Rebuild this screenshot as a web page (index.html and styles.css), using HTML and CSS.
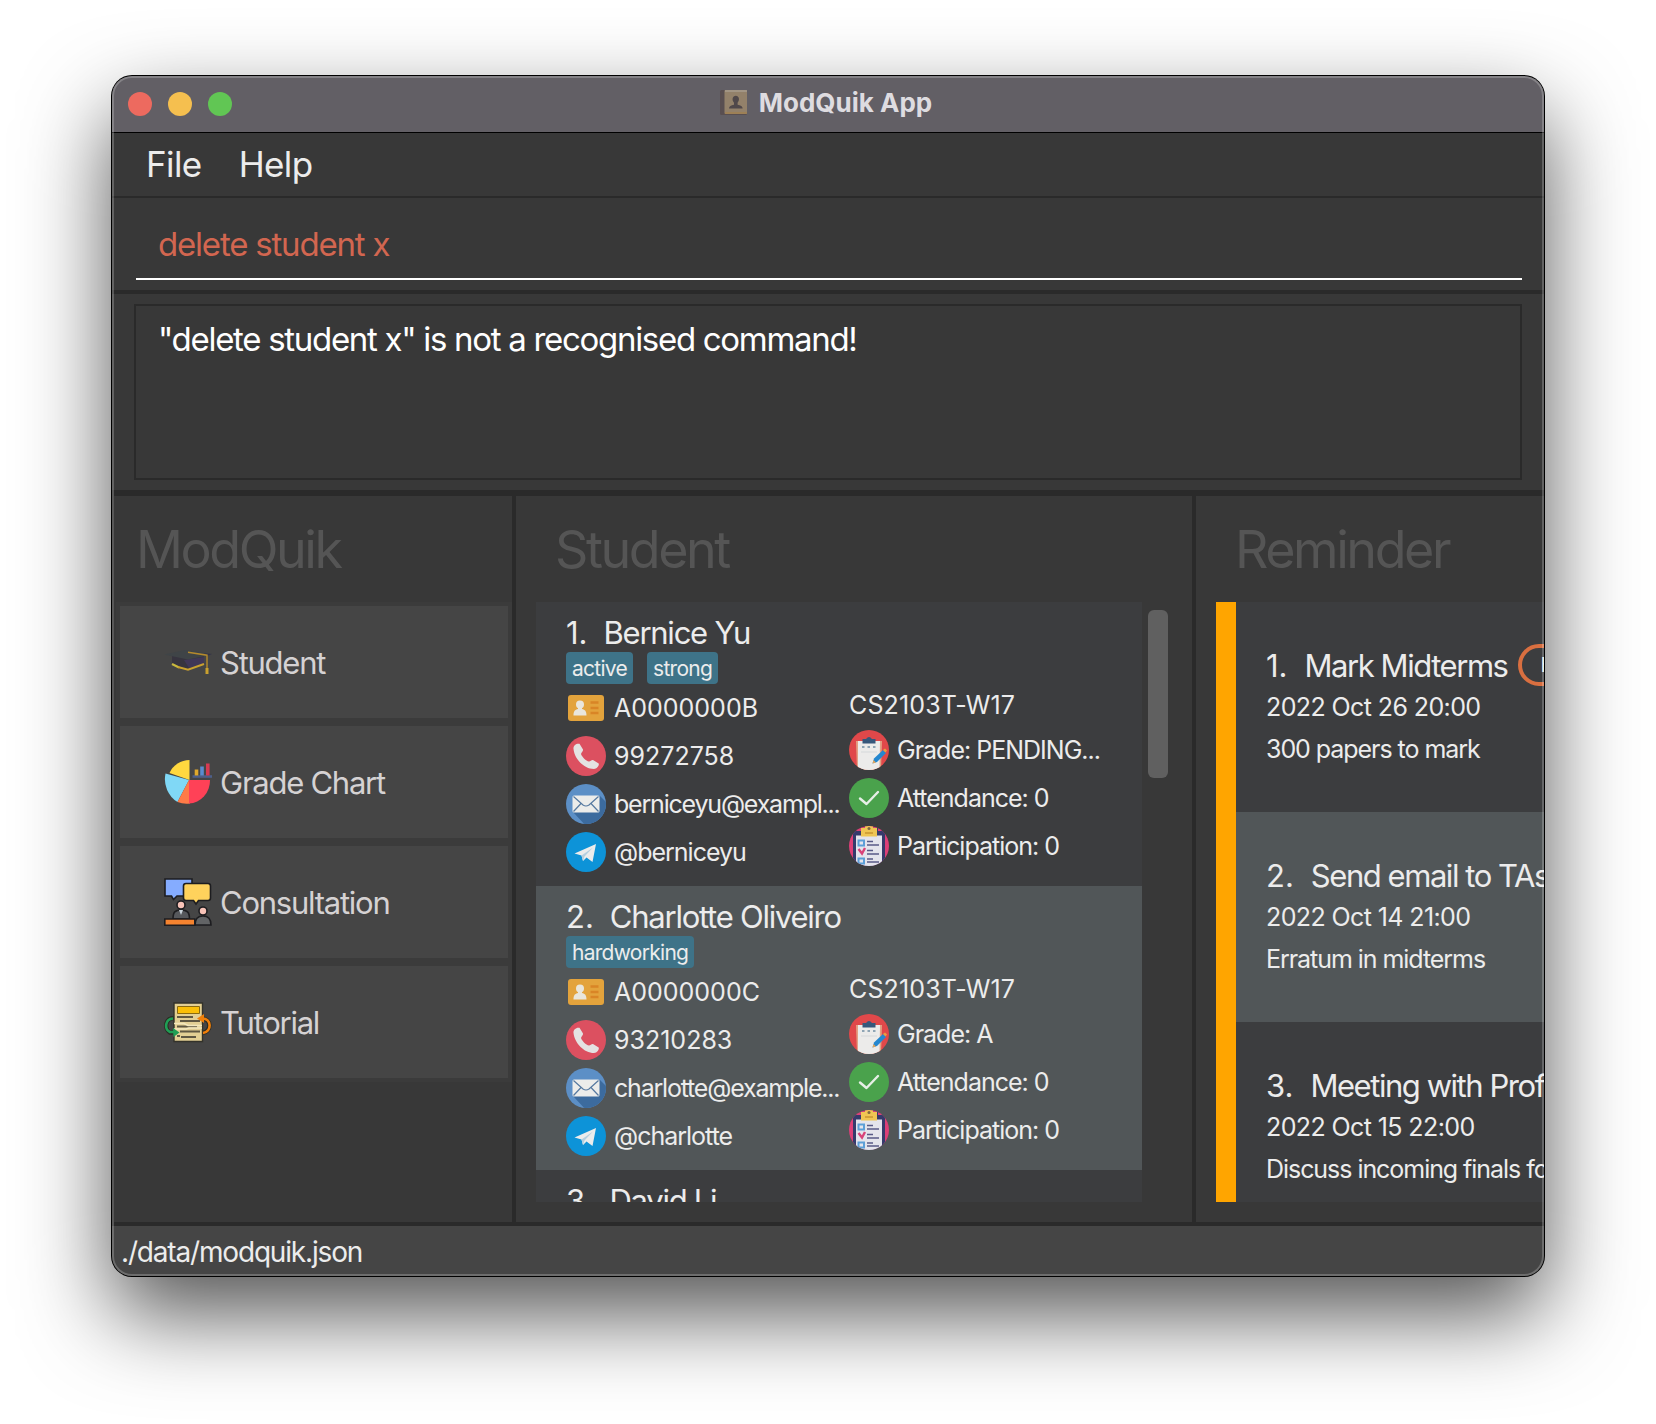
FILE: index.html
```html
<!DOCTYPE html>
<html lang="en">
<head>
<meta charset="utf-8">
<title>ModQuik App</title>
<link rel="stylesheet" href="styles.css">
</head>
<body>
<svg class="sprite" aria-hidden="true">
  <defs>
    <clipPath id="disc"><circle cx="20" cy="20" r="20"/></clipPath>
    <symbol id="i-id" viewBox="0 0 40 40">
      <rect x="2" y="7" width="36" height="26" rx="3" fill="#e3a33c"/>
      <circle cx="14" cy="16.5" r="4" fill="#e9e6dc"/>
      <path d="M12 18h4v3c3 .8 4.500 2 4.500 6.500h-13c0-4.500 1.500-5.700 4.500-6.500z" fill="#e9e6dc"/>
      <path d="M24.500 14.500h8M24.500 20h8M24.500 25h8" stroke="#d98526" stroke-width="2.600"/>
    </symbol>
    <symbol id="i-phone" viewBox="0 0 40 40">
      <circle cx="20" cy="20" r="20" fill="#dc5060"/>
      <path d="M7.500 13C7 9.500 10.500 7 13.500 7.800L17 13.500c.4 1.800-1.800 3-2 4.500 1 3 5 7 8 7.500 1.500-.2 2.500-1.800 4-1.500l5.700 3.500C33.500 29.500 31 33 28 33 18 33 8.500 23 7.500 13z" fill="#e4e2e2"/>
    </symbol>
    <symbol id="i-mail" viewBox="0 0 40 40">
      <circle cx="20" cy="20" r="20" fill="#5c8fc6"/>
      <path d="M34 12l8 8v22H20L7 28z" fill="#3c6b9e" clip-path="url(#disc)"/>
      <rect x="6.500" y="11.500" width="27" height="17" rx="1.500" fill="#ececea"/>
      <path d="M7.500 12.500l9.500 8.500q3 2 6 0l9.500-8.500M7.500 27.500l7.500-8M32.500 27.500l-7.500-8" fill="none" stroke="#5679a0" stroke-width="1.200"/>
    </symbol>
    <symbol id="i-send" viewBox="0 0 40 40">
      <circle cx="20" cy="20" r="20" fill="#0d93d8"/>
      <path d="M8.500 21.500L30 12l-3.500 18-6-4.500-3.500 3.500-1.500-5.500z" fill="#ececec"/>
      <path d="M15.500 23.500L27 15.500 18.500 24.500 17 29z" fill="#b5cfdf"/>
    </symbol>
    <symbol id="i-grade" viewBox="0 0 40 40">
      <g clip-path="url(#disc)">
        <rect width="40" height="40" fill="#e0484a"/>
        <path d="M7 11h26l-1 29H8z" fill="#e2a184"/>
        <path d="M9 11h22l-.5 29H9z" fill="#ecebea"/>
        <path d="M13.500 13.500V9h3.500q3-4 6 0h3.500v4.500z" fill="#36577b"/>
        <path d="M13 17h2.500M18.500 17H21M24 17h2.500" stroke="#8fa5b5" stroke-width="2.200"/>
        <path d="M12 22h16" stroke="#d5d8da" stroke-width="1"/>
      </g>
      <path d="M23.500 33.500l1.500-5 9-8.500 3 3-9 9z" fill="#2587cf"/>
      <path d="M23.500 33.500l1-3.500 2.500 2.500z" fill="#e2a55c"/>
      <path d="M34 20l2-1.500 2 2-1.500 2z" fill="#e8a040"/>
    </symbol>
    <symbol id="i-check" viewBox="0 0 40 40">
      <circle cx="20" cy="20" r="20" fill="#4aa24c"/>
      <path d="M11 20.500l6.500 5.500L29 14" fill="none" stroke="#e6efe6" stroke-width="2.400" stroke-linecap="round" stroke-linejoin="round"/>
    </symbol>
    <symbol id="i-part" viewBox="0 0 40 40">
      <g clip-path="url(#disc)">
        <rect width="40" height="40" fill="#dc3f78"/>
        <path d="M4 5h8V2h17v3h7v35H4z" fill="#363a6b"/>
        <rect x="7" y="9.500" width="26" height="31" fill="#e4e4ec"/>
        <path d="M12 2h4V0h8v2h4v8.500H12z" fill="#efc553"/>
        <circle cx="20" cy="2.500" r="1.500" fill="#7f683f"/>
        <path d="M16 7h8" stroke="#c99530" stroke-width="1.300"/>
        <path d="M9.500 14.500h5.500v5H9.500zM9.500 32.500h5.500v5H9.500z" fill="none" stroke="#5c9fd8" stroke-width="2"/>
        <path d="M9.500 23l3.500 4.500 3-5.500" fill="none" stroke="#d8437a" stroke-width="2.400"/>
        <path d="M18 15.500h6M18 19h12M18 24.500h6M18 28h12M18 33h6M18 36h12" stroke="#585a86" stroke-width="1.700"/>
      </g>
    </symbol>
    <symbol id="i-cap" viewBox="0 0 48 48">
      <path d="M8 18v9l15 4 17-4v-9z" fill="#37343f"/>
      <path d="M20 22l20-3v7l-15 4z" fill="#403757"/>
      <path d="M0 16.500L21 12l27 4-4 1.500L24 21.500z" fill="#3f4447"/>
      <path d="M40 15.500l8 .5-4 1.500z" fill="#33304a"/>
      <path d="M8 26l7 3.500" stroke="#c8b83e" stroke-width="2.200"/>
      <path d="M14 29l10 2.600L40 26" fill="none" stroke="#c9a02f" stroke-width="2"/>
      <path d="M24 14.200l19 3V32" fill="none" stroke="#b58a2c" stroke-width="1.400"/>
      <path d="M43 30v6" stroke="#c9a02f" stroke-width="3"/>
    </symbol>
    <symbol id="i-pie" viewBox="0 0 48 48">
      <path d="M25.500 22V2A22 22 0 0 0 5.500 15z" fill="#ffd83f"/>
      <path d="M25 22L1.500 15.500A27 27 0 0 0 13.500 44z" fill="#80d8f6"/>
      <path d="M25 22L13.500 44A24 24 0 0 0 26 45.500z" fill="#ff7a47"/>
      <path d="M25 22h21A22 23 0 0 1 25 45.500z" fill="#ff4157"/>
      <path d="M28.500 18.500H48" stroke="#4d5f8a" stroke-width="2.600"/>
      <path d="M32.500 11.500v6" stroke="#e0a92c" stroke-width="3.600"/>
      <path d="M38 8.500v9" stroke="#5b8cd0" stroke-width="3.600"/>
      <path d="M43.800 5.500v12" stroke="#d63a52" stroke-width="3.600"/>
    </symbol>
    <symbol id="i-consult" viewBox="0 0 48 48">
      <g stroke="#1d1d20" stroke-width="1.600">
        <path d="M1 1h27v17H13l-3.500 3.500L7.500 18H1z" fill="#85acff"/>
        <path d="M22 5.500h22q2.500 0 2.500 2.500v12q0 2.500-2.500 2.500H34.500L32 26l-2.500-3.500H22q-2.500 0-2.500-2.500V8q0-2.500 2.500-2.500z" fill="#ffd25c"/>
        <path d="M9 41c0-7 2-9 8-9s8.500 2 8.500 9z" fill="#56585c"/>
        <path d="M31 47c0-6 2-9 8-9s8 3 8 9z" fill="#626466"/>
        <circle cx="17" cy="27" r="4" fill="#f8c3b8"/>
        <circle cx="39" cy="33" r="4" fill="#f8c3b8"/>
        <path d="M.8 41h30v6.200H.8z" fill="#f5832f"/>
      </g>
      <path d="M15 32l2 5 2-5z" fill="#c9d3da"/>
    </symbol>
    <symbol id="i-tutorial" viewBox="0 0 48 48">
      <path d="M11 20C1 19 0 31 6 34.500h6" fill="none" stroke="#2c2c24" stroke-width="4.500"/>
      <path d="M37 20.500C48 20 48 34 38 35" fill="none" stroke="#2c2c24" stroke-width="4.500"/>
      <path d="M10 5h28.500v38.500H10z" fill="#e3cf94" stroke="#33322a" stroke-width="1.400"/>
      <path d="M13.500 8.500h22v7h-22z" fill="#fbbf08" stroke="#8a6a10" stroke-width="1"/>
      <path d="M13 19h16M16 23h20M13 28.500h20M16 33.500h20M13 38h3M17 39h15" stroke="#5f5742" stroke-width="1.900"/>
      <path d="M10 25.500h10l4 2h14M10 31h12l3-1h13" fill="none" stroke="#f3e7bd" stroke-width="1.500"/>
      <path d="M9 20.500C1 21 0 31 6 34h4" fill="none" stroke="#1f9d55" stroke-width="2.600"/>
      <path d="M9 30l6.500 4.500L9.500 39z" fill="#1f9d55"/>
      <path d="M38 20.500C48 20 48 34 39 35" fill="none" stroke="#ef7f0a" stroke-width="2.600"/>
      <path d="M40 16l-7 4.500 7 4.500z" fill="#ef7f0a"/>
    </symbol>
  </defs>
</svg>

<div class="window">
  <header class="titlebar">
    <div class="lights"><i class="light red"></i><i class="light amber"></i><i class="light green"></i></div>
    <div class="caption">
      <svg class="book" viewBox="0 0 28 28">
        <rect x="0" y="1" width="27" height="25" rx="1.500" fill="#594f51"/>
        <rect x="4.500" y="1" width="22.500" height="24" rx="1" fill="#93816a"/>
        <path d="M5 2h22" stroke="#a79c8e" stroke-width="1.500"/>
        <path d="M5 24h22" stroke="#a08051" stroke-width="1.500"/>
        <path d="M9 19.500c0-2.500 2-3 5-3.700v-2c-2.500-3-1.500-7 1.800-7s4.300 4 1.800 7v2c3 .7 5 1.200 5 3.700z" fill="#50484a"/>
      </svg>
      <span class="app-name">ModQuik App</span>
    </div>
  </header>
  <nav class="menubar"><span>File</span><span>Help</span></nav>
  <section class="command"><div class="command-field">delete student x</div></section>
  <section class="result"><div class="result-box">"delete student x" is not a recognised command!</div></section>
  <main class="panels">
    <section class="panel side">
      <h2>ModQuik</h2>
      <div class="tabs">
        <div class="tab"><svg><use href="#i-cap"/></svg><span>Student</span></div>
        <div class="tab"><svg><use href="#i-pie"/></svg><span>Grade Chart</span></div>
        <div class="tab"><svg><use href="#i-consult"/></svg><span>Consultation</span></div>
        <div class="tab"><svg><use href="#i-tutorial"/></svg><span>Tutorial</span></div>
      </div>
    </section>
    <section class="panel students">
      <h2>Student</h2>
      <div class="scroller">
        <div class="list">
          <article class="student">
            <h3><span class="num">1.</span><span>Bernice Yu</span></h3>
            <div class="tags"><span class="tag">active</span><span class="tag">strong</span></div>
            <div class="fields">
              <div class="col">
                <div class="field code"><svg><use href="#i-id"/></svg><span>A0000000B</span></div>
                <div class="field code"><svg><use href="#i-phone"/></svg><span>99272758</span></div>
                <div class="field mail"><svg><use href="#i-mail"/></svg><span>berniceyu@exampl...</span></div>
                <div class="field"><svg><use href="#i-send"/></svg><span>@berniceyu</span></div>
              </div>
              <div class="col">
                <div class="module">CS2103T-W17</div>
                <div class="field"><svg><use href="#i-grade"/></svg><span>Grade: PENDING...</span></div>
                <div class="field"><svg><use href="#i-check"/></svg><span>Attendance: 0</span></div>
                <div class="field"><svg><use href="#i-part"/></svg><span>Participation: 0</span></div>
              </div>
            </div>
          </article>
          <article class="student alt">
            <h3><span class="num">2.</span><span>Charlotte Oliveiro</span></h3>
            <div class="tags"><span class="tag">hardworking</span></div>
            <div class="fields">
              <div class="col">
                <div class="field code"><svg><use href="#i-id"/></svg><span>A0000000C</span></div>
                <div class="field code"><svg><use href="#i-phone"/></svg><span>93210283</span></div>
                <div class="field mail"><svg><use href="#i-mail"/></svg><span>charlotte@example...</span></div>
                <div class="field"><svg><use href="#i-send"/></svg><span>@charlotte</span></div>
              </div>
              <div class="col">
                <div class="module">CS2103T-W17</div>
                <div class="field"><svg><use href="#i-grade"/></svg><span>Grade: A</span></div>
                <div class="field"><svg><use href="#i-check"/></svg><span>Attendance: 0</span></div>
                <div class="field"><svg><use href="#i-part"/></svg><span>Participation: 0</span></div>
              </div>
            </div>
          </article>
          <article class="student"><h3><span class="num">3.</span><span>David Li</span></h3></article>
        </div>
        <div class="thumb"></div>
      </div>
    </section>
    <section class="panel reminders">
      <h2>Reminder</h2>
      <div class="reminder-list">
        <article class="reminder">
          <h3><span class="num">1.</span><span>Mark Midterms</span><span class="priority">HIGH</span></h3>
          <p class="date">2022 Oct 26 20:00</p>
          <p>300 papers to mark</p>
        </article>
        <article class="reminder alt">
          <h3><span class="num">2.</span><span>Send email to TAs</span></h3>
          <p class="date">2022 Oct 14 21:00</p>
          <p>Erratum in midterms</p>
        </article>
        <article class="reminder">
          <h3><span class="num">3.</span><span>Meeting with Prof</span></h3>
          <p class="date">2022 Oct 15 22:00</p>
          <p>Discuss incoming finals for</p>
        </article>
      </div>
    </section>
  </main>
  <footer class="status">./data/modquik.json</footer>
</div>
</body>
</html>
```
FILE: styles.css
```css
* { box-sizing: border-box; }

body {
  margin: 0;
  width: 1656px;
  height: 1424px;
  padding: 76px 112px 148px;
  overflow: hidden;
  background: #fff;
  color: #ececec;
  font-family: Inter, "Liberation Sans", sans-serif;
  white-space: nowrap;
}

h2, h3, p { margin: 0; font-weight: 400; }

.sprite { position: absolute; width: 0; height: 0; }

.window {
  position: relative;
  display: flex;
  flex-direction: column;
  width: 1432px;
  height: 1200px;
  border-radius: 20px;
  overflow: hidden;
  background: #383838;
  box-shadow: 0 0 0 1px #000, 0 38px 88px rgba(0, 0, 0, .68);
}

/* light rim drawn over the window content */
.window::after {
  content: "";
  position: absolute;
  inset: 0;
  border-radius: 20px;
  box-shadow: inset 0 0 0 2px rgba(255, 255, 255, .22);
  pointer-events: none;
}

.titlebar {
  display: grid;
  grid-template-columns: 1fr auto 1fr;
  align-items: center;
  height: 57px;
  padding: 0 20px 1px 16px;
  border-bottom: 1px solid #000;
  background: #625f65;
}
.lights { display: flex; gap: 16px; }
.light { width: 24px; height: 24px; border-radius: 50%; }
.red { background: #ed6a5f; }
.amber { background: #f5bf4f; }
.green { background: #61c654; }
.caption { display: flex; align-items: center; gap: 11px; padding-bottom: 3px; }
.book { width: 28px; height: 28px; margin-top: 2px; }
.app-name { color: #dedce0; font-size: 26px; font-weight: 700; }

.menubar {
  display: flex;
  gap: 37px;
  height: 65px;
  padding-left: 34px;
  border-bottom: 2px solid #2a2a2a;
  font-size: 35px;
  line-height: 63px;
  letter-spacing: -.6px;
}

.command { height: 96px; padding: 12px 22px 10px 24px; border-bottom: 4px solid #2a2a2a; }
.command-field {
  height: 70px;
  padding-left: 22px;
  border-bottom: 2px solid #fff;
  color: #d26650;
  font-size: 33px;
  line-height: 68px;
  letter-spacing: -1.2px;
}

.result { height: 202px; padding: 10px 22px; border-bottom: 6px solid #2a2a2a; }
.result-box {
  height: 176px;
  padding: 8px 22px;
  border: 2px solid #2a2a2a;
  color: #fff;
  font-size: 33px;
  line-height: 50px;
  letter-spacing: -1.3px;
}

.panels {
  display: grid;
  grid-template-columns: 400px 680px 348px;
  height: 730px;
  padding-left: 2px;
  border-left: 2px solid #2a2a2a;
  border-bottom: 4px solid #2a2a2a;
}
.panel { padding-top: 24px; overflow: hidden; }
.side, .students { border-right: 4px solid #2a2a2a; }
.panel h2 {
  margin-bottom: 22px;
  color: #555;
  font-size: 52px;
  line-height: 60px;
  letter-spacing: -2.45px;
}

.side h2 { padding-left: 20px; }
.tabs { display: flex; flex-direction: column; gap: 8px; padding: 4px; background: #3b3b3b; }
.tab {
  display: flex;
  align-items: center;
  gap: 8px;
  height: 112px;
  padding-left: 44px;
  background: #454545;
  color: #d5d2d3;
  font-size: 31px;
  letter-spacing: -1.25px;
}
.tab svg { flex: none; width: 48px; height: 48px; }

.students { padding-left: 20px; }
.students h2 { padding-left: 19px; }
.scroller { display: flex; gap: 6px; height: 600px; }
.list { width: 606px; overflow: hidden; }
.thumb { width: 20px; height: 168px; margin-top: 8px; border-radius: 6px; background: #606060; }

.student { height: 284px; padding: 12px 30px 14px; background: #3c3d3f; }
.student.alt, .reminder.alt { background: #515658; }
.student h3 { display: flex; gap: 16px; font-size: 31px; line-height: 38px; letter-spacing: -1.25px; }
.num { letter-spacing: 0; }
.tags { display: flex; gap: 14px; height: 32px; margin-bottom: 4px; }
.tag {
  padding: 0 6px;
  border-radius: 4px;
  background: #3e7388;
  font-size: 21px;
  line-height: 33px;
  letter-spacing: -.72px;
}
.fields { display: grid; grid-template-columns: 283px 1fr; font-size: 25px; }
.col { display: flex; flex-direction: column; gap: 8px; min-width: 0; }
.field { display: flex; align-items: center; gap: 8px; height: 40px; letter-spacing: -1px; }
.field svg { flex: none; width: 40px; height: 40px; }
.code { letter-spacing: 0; }
.mail { letter-spacing: -1.2px; }
.module { height: 34px; line-height: 34px; letter-spacing: .15px; }

.reminders { padding-left: 20px; }
.reminders h2 { padding-left: 19px; }
.reminder-list { height: 600px; border-left: 20px solid #ffa500; overflow: hidden; }
.reminder {
  height: 210px;
  padding: 42px 0 0 30px;
  background: #3c3d3f;
  font-size: 25px;
  line-height: 42px;
  letter-spacing: -1.05px;
}
.reminder h3 { display: flex; gap: 17px; font-size: 31px; line-height: 43px; height: 42px; letter-spacing: -1.45px; }
.date { letter-spacing: -.6px; }
.priority {
  height: 42px;
  margin-left: -7px;
  padding: 0 19px;
  border: 4px solid #d96f40;
  border-radius: 21px;
  font-size: 20px;
  line-height: 34px;
}

.status {
  height: 50px;
  padding-left: 9px;
  background: #454545;
  font-size: 28px;
  line-height: 52px;
  letter-spacing: -1.17px;
}
```
